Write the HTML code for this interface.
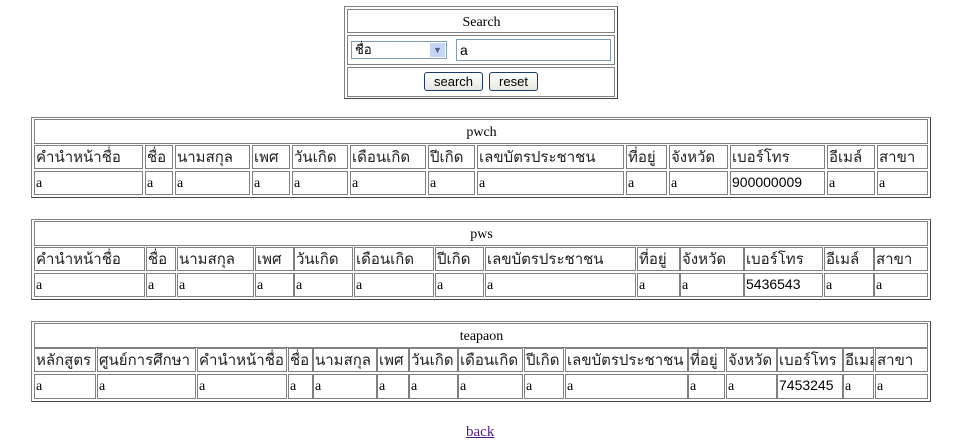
<!DOCTYPE html>
<html><head><meta charset="utf-8"><style>
body{margin:0;width:964px;height:447px;background:#fff;position:relative;overflow:hidden}
.o{position:absolute;border:1px solid #808080;border-right-color:#444;border-bottom-color:#444;box-sizing:border-box}
.c{position:absolute;border:1px solid #808080;box-sizing:border-box;white-space:nowrap;overflow:hidden;padding-left:1px}
.t{font:14px "Liberation Serif",serif;text-align:center;line-height:25px}
.h{font:15px "Liberation Sans",sans-serif;color:#222;line-height:23px}
.d{font:14px "Liberation Serif",serif;line-height:23px}
.n{font:14px "Liberation Sans",sans-serif;line-height:21px}
.btn{position:absolute;border:1px solid #1c3c6a;border-radius:3px;background:linear-gradient(#fff,#e6e6e0);font:13px "Liberation Sans",sans-serif;text-align:center;line-height:17px;box-sizing:border-box}
</style></head><body>
<div class="o" style="left:344px;top:6px;width:274px;height:93px"></div>
<div class="c t" style="left:347px;top:9px;width:268px;height:24px">Search</div>
<div class="c" style="left:347px;top:35px;width:268px;height:30px"></div>
<div class="c" style="left:347px;top:67px;width:268px;height:30px"></div>
<div style="position:absolute;left:351px;top:41px;width:96px;height:18px;border:1px solid #7f9db9;box-sizing:border-box;font:13px 'Liberation Sans',sans-serif;line-height:16px;padding-left:3px">ชื่อ<span style="position:absolute;right:1px;top:1px;width:15px;height:14px;background:#c4d4f4;color:#4d6185;font-size:9px;line-height:14px;text-align:center">&#9660;</span></div>
<div style="position:absolute;left:456px;top:39px;width:155px;height:22px;border:1px solid #7f9db9;box-sizing:border-box;font:14px 'Liberation Sans',sans-serif;line-height:20px;padding-left:3px">a</div>
<div class="btn" style="left:424px;top:72px;width:59px;height:19px">search</div>
<div class="btn" style="left:489px;top:72px;width:49px;height:19px">reset</div>

<!-- table 1 -->
<div class="o" style="left:31px;top:117px;width:900px;height:81px"></div>
<div class="c t" style="left:34px;top:119px;width:894px;height:25px">pwch</div>
<div class="c h" style="left:34px;top:145px;width:109px;height:24px">คำนำหน้าชื่อ</div>
<div class="c h" style="left:145px;top:145px;width:28px;height:24px">ชื่อ</div>
<div class="c h" style="left:175px;top:145px;width:75px;height:24px">นามสกุล</div>
<div class="c h" style="left:252px;top:145px;width:38px;height:24px">เพศ</div>
<div class="c h" style="left:292px;top:145px;width:56px;height:24px">วันเกิด</div>
<div class="c h" style="left:350px;top:145px;width:76px;height:24px">เดือนเกิด</div>
<div class="c h" style="left:428px;top:145px;width:47px;height:24px">ปีเกิด</div>
<div class="c h" style="left:477px;top:145px;width:147px;height:24px">เลขบัตรประชาชน</div>
<div class="c h" style="left:626px;top:145px;width:41px;height:24px">ที่อยู่</div>
<div class="c h" style="left:669px;top:145px;width:59px;height:24px">จังหวัด</div>
<div class="c h" style="left:730px;top:145px;width:95px;height:24px">เบอร์โทร</div>
<div class="c h" style="left:827px;top:145px;width:48px;height:24px">อีเมล์</div>
<div class="c h" style="left:877px;top:145px;width:51px;height:24px">สาขา</div>
<div class="c d" style="left:34px;top:171px;width:109px;height:24px">a</div>
<div class="c d" style="left:145px;top:171px;width:28px;height:24px">a</div>
<div class="c d" style="left:175px;top:171px;width:75px;height:24px">a</div>
<div class="c d" style="left:252px;top:171px;width:38px;height:24px">a</div>
<div class="c d" style="left:292px;top:171px;width:56px;height:24px">a</div>
<div class="c d" style="left:350px;top:171px;width:76px;height:24px">a</div>
<div class="c d" style="left:428px;top:171px;width:47px;height:24px">a</div>
<div class="c d" style="left:477px;top:171px;width:147px;height:24px">a</div>
<div class="c d" style="left:626px;top:171px;width:41px;height:24px">a</div>
<div class="c d" style="left:669px;top:171px;width:59px;height:24px">a</div>
<div class="c n" style="left:730px;top:171px;width:95px;height:24px">900000009</div>
<div class="c d" style="left:827px;top:171px;width:48px;height:24px">a</div>
<div class="c d" style="left:877px;top:171px;width:51px;height:24px">a</div>

<!-- table 2 -->
<div class="o" style="left:31px;top:219px;width:900px;height:81px"></div>
<div class="c t" style="left:34px;top:221px;width:894px;height:25px">pws</div>
<div class="c h" style="left:34px;top:247px;width:111px;height:24px">คำนำหน้าชื่อ</div>
<div class="c h" style="left:146px;top:247px;width:30px;height:24px">ชื่อ</div>
<div class="c h" style="left:177px;top:247px;width:77px;height:24px">นามสกุล</div>
<div class="c h" style="left:255px;top:247px;width:39px;height:24px">เพศ</div>
<div class="c h" style="left:294px;top:247px;width:59px;height:24px">วันเกิด</div>
<div class="c h" style="left:354px;top:247px;width:80px;height:24px">เดือนเกิด</div>
<div class="c h" style="left:435px;top:247px;width:49px;height:24px">ปีเกิด</div>
<div class="c h" style="left:485px;top:247px;width:151px;height:24px">เลขบัตรประชาชน</div>
<div class="c h" style="left:637px;top:247px;width:43px;height:24px">ที่อยู่</div>
<div class="c h" style="left:680px;top:247px;width:64px;height:24px">จังหวัด</div>
<div class="c h" style="left:744px;top:247px;width:79px;height:24px">เบอร์โทร</div>
<div class="c h" style="left:824px;top:247px;width:50px;height:24px">อีเมล์</div>
<div class="c h" style="left:874px;top:247px;width:54px;height:24px">สาขา</div>
<div class="c d" style="left:34px;top:273px;width:111px;height:24px">a</div>
<div class="c d" style="left:146px;top:273px;width:30px;height:24px">a</div>
<div class="c d" style="left:177px;top:273px;width:77px;height:24px">a</div>
<div class="c d" style="left:255px;top:273px;width:39px;height:24px">a</div>
<div class="c d" style="left:294px;top:273px;width:59px;height:24px">a</div>
<div class="c d" style="left:354px;top:273px;width:80px;height:24px">a</div>
<div class="c d" style="left:435px;top:273px;width:49px;height:24px">a</div>
<div class="c d" style="left:485px;top:273px;width:151px;height:24px">a</div>
<div class="c d" style="left:637px;top:273px;width:43px;height:24px">a</div>
<div class="c d" style="left:680px;top:273px;width:64px;height:24px">a</div>
<div class="c n" style="left:744px;top:273px;width:79px;height:24px">5436543</div>
<div class="c d" style="left:824px;top:273px;width:50px;height:24px">a</div>
<div class="c d" style="left:874px;top:273px;width:54px;height:24px">a</div>

<!-- table 3 -->
<div class="o" style="left:31px;top:321px;width:900px;height:81px"></div>
<div class="c t" style="left:34px;top:323px;width:894px;height:25px">teapaon</div>
<div class="c h" style="left:34px;top:348px;width:62px;height:24px">หลักสูตร</div>
<div class="c h" style="left:97px;top:348px;width:99px;height:24px">ศูนย์การศึกษา</div>
<div class="c h" style="left:197px;top:348px;width:90px;height:24px">คำนำหน้าชื่อ</div>
<div class="c h" style="left:288px;top:348px;width:25px;height:24px">ชื่อ</div>
<div class="c h" style="left:313px;top:348px;width:64px;height:24px">นามสกุล</div>
<div class="c h" style="left:377px;top:348px;width:32px;height:24px">เพศ</div>
<div class="c h" style="left:409px;top:348px;width:49px;height:24px">วันเกิด</div>
<div class="c h" style="left:458px;top:348px;width:65px;height:24px">เดือนเกิด</div>
<div class="c h" style="left:524px;top:348px;width:40px;height:24px">ปีเกิด</div>
<div class="c h" style="left:565px;top:348px;width:123px;height:24px">เลขบัตรประชาชน</div>
<div class="c h" style="left:688px;top:348px;width:37px;height:24px">ที่อยู่</div>
<div class="c h" style="left:726px;top:348px;width:51px;height:24px">จังหวัด</div>
<div class="c h" style="left:777px;top:348px;width:66px;height:24px">เบอร์โทร</div>
<div class="c h" style="left:843px;top:348px;width:31px;height:24px">อีเมล์</div>
<div class="c h" style="left:875px;top:348px;width:53px;height:24px">สาขา</div>
<div class="c d" style="left:34px;top:374px;width:62px;height:25px">a</div>
<div class="c d" style="left:97px;top:374px;width:99px;height:25px">a</div>
<div class="c d" style="left:197px;top:374px;width:90px;height:25px">a</div>
<div class="c d" style="left:288px;top:374px;width:25px;height:25px">a</div>
<div class="c d" style="left:313px;top:374px;width:64px;height:25px">a</div>
<div class="c d" style="left:377px;top:374px;width:32px;height:25px">a</div>
<div class="c d" style="left:409px;top:374px;width:49px;height:25px">a</div>
<div class="c d" style="left:458px;top:374px;width:65px;height:25px">a</div>
<div class="c d" style="left:524px;top:374px;width:40px;height:25px">a</div>
<div class="c d" style="left:565px;top:374px;width:123px;height:25px">a</div>
<div class="c d" style="left:688px;top:374px;width:37px;height:25px">a</div>
<div class="c d" style="left:726px;top:374px;width:51px;height:25px">a</div>
<div class="c n" style="left:777px;top:374px;width:66px;height:25px">7453245</div>
<div class="c d" style="left:843px;top:374px;width:31px;height:25px">a</div>
<div class="c d" style="left:875px;top:374px;width:53px;height:25px">a</div>

<a style="position:absolute;left:466px;top:424px;font:15px 'Liberation Serif',serif;color:#551a8b;text-decoration:underline">back</a>
</body></html>
